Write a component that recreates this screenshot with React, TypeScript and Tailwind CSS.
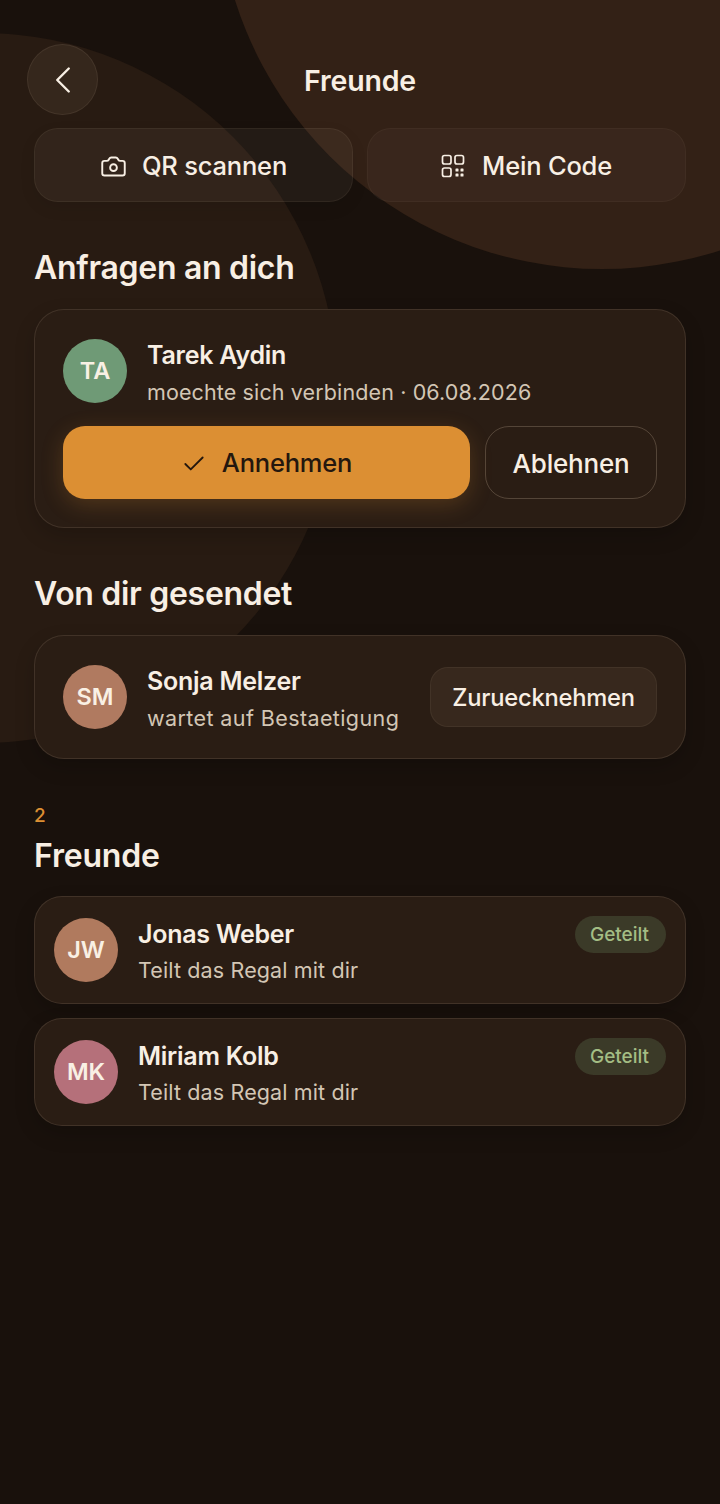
import React from "react";
import { Camera, Check, ChevronLeft } from "lucide-react";

function QrIcon() {
  return (
    <svg width="24" height="24" viewBox="0 0 24 24" fill="none" stroke="currentColor" strokeWidth="1.7">
      <rect x="1.5" y="1.5" width="8.5" height="8.5" rx="2" />
      <rect x="14" y="1.5" width="8.5" height="8.5" rx="2" />
      <rect x="1.5" y="14" width="8.5" height="8.5" rx="2" />
      <g fill="currentColor" stroke="none">
        <rect x="14.5" y="14.5" width="3" height="3" rx="0.6" />
        <rect x="19.5" y="14.5" width="3" height="3" rx="0.6" />
        <rect x="14.5" y="19.5" width="3" height="3" rx="0.6" />
        <rect x="19.5" y="19.5" width="3" height="3" rx="0.6" />
      </g>
    </svg>
  );
}

function Avatar({ label, color }: { label: string; color: string }) {
  return (
    <div className={`mt-px flex h-16 w-16 shrink-0 items-center justify-center rounded-full text-[23.5px] font-semibold text-[#f9f0e4] ${color}`}>
      {label}
    </div>
  );
}

function Person({ name, sub, subClass }: { name: string; sub: string; subClass: string }) {
  return (
    <div className="min-w-0 flex-1">
      <div className="text-[25px] leading-[34px] font-semibold tracking-[-0.25px] text-[#f8efe4]">{name}</div>
      <div className={`text-[21.5px] leading-[28px] font-normal text-[#d3c6b4] ${subClass}`}>{sub}</div>
    </div>
  );
}

function Friend({ name, label, color }: { name: string; label: string; color: string }) {
  return (
    <div className="flex h-[108px] items-start gap-5 rounded-[28px] border border-[#ffe6c81c] bg-[#2a1d14] pt-5 pr-[19px] pl-[19px] shadow-[0_8px_20px_rgba(0,0,0,0.18)]">
      <Avatar label={label} color={color} />
      <Person name={name} sub="Teilt das Regal mit dir" subClass="mt-[5px] tracking-[0.13px]" />
      <div className="-mt-px flex h-[37px] w-[91px] items-center justify-center rounded-full bg-[#3b3a28] pt-[2px] pr-[2px] text-[19px] font-medium text-[#a3bd84]">
        Geteilt
      </div>
    </div>
  );
}

export default function App() {
  return (
    <div className="relative h-[1504px] overflow-hidden bg-[#19110c] font-['Inter',sans-serif]">
      <div className="absolute top-[-501px] left-[217px] h-[770px] w-[770px] rounded-full bg-[#332116]" />
      <div className="absolute top-[33px] left-[-373px] h-[710px] w-[710px] rounded-full bg-[#281b12]" />
      <div className="relative px-[34px] pt-11">
        <header className="relative flex h-[70px] items-center justify-center">
          <button className="absolute top-0 left-[-7px] flex h-[71px] w-[71px] items-center justify-center rounded-full border border-[#ffe6c814] bg-[#35271c] text-[#f8efe4]">
            <ChevronLeft size={46} strokeWidth={1.25} />
          </button>
          <h1 className="pt-1 text-[28.5px] font-semibold tracking-[-0.2px] text-[#f8efe4]">Freunde</h1>
        </header>

        <div className="mt-[14px] grid grid-cols-2 gap-[14px]">
          <button className="flex h-[74px] items-center justify-center gap-[15px] rounded-[24px] border border-[#ffe6c80f] bg-[#ffeedc0c] pt-[2px] text-[25.5px] font-medium tracking-[-0.2px] text-[#f8efe4] shadow-[0_6px_16px_rgba(0,0,0,0.08)]">
            <Camera size={27} strokeWidth={1.7} />
            QR scannen
          </button>
          <button className="flex h-[74px] items-center justify-center gap-[17px] rounded-[24px] border border-[#ffe6c80a] bg-[#ffeedc08] pt-[2px] text-[25.5px] font-medium tracking-[-0.2px] text-[#f8efe4]">
            <QrIcon />
            Mein Code
          </button>
        </div>

        <h2 className="mt-[44px] text-[32px] leading-[44px] font-semibold tracking-[-0.3px] text-[#f8efe4]">Anfragen an dich</h2>

        <section className="mt-[19px] h-[219px] rounded-[30px] border border-[#ffe6c81c] bg-[#2a1d14] px-7 pt-7 shadow-[0_8px_20px_rgba(0,0,0,0.18)]">
          <div className="flex items-start gap-5">
            <Avatar label="TA" color="bg-[#6f9a76]" />
            <Person name="Tarek Aydin" sub="moechte sich verbinden · 06.08.2026" subClass="mt-[6px] tracking-[0.12px]" />
          </div>
          <div className="mt-5 flex gap-[15px]">
            <button className="flex h-[73px] w-[407px] items-center justify-center gap-[15px] rounded-[22px] bg-[#dc8f33] pt-[2px] text-[25.5px] font-medium tracking-[-0.2px] text-[#24170e] shadow-[0_6px_22px_rgba(220,143,51,0.22)]">
              <Check size={26} strokeWidth={1.7} />
              Annehmen
            </button>
            <button className="flex h-[73px] flex-1 items-center justify-center rounded-[24px] border border-[#ffe6c833] pt-[2px] text-[26px] font-medium tracking-[-0.2px] text-[#f8efe4]">
              Ablehnen
            </button>
          </div>
        </section>

        <h2 className="mt-[44px] text-[32px] leading-[44px] font-semibold tracking-[-0.3px] text-[#f8efe4]">Von dir gesendet</h2>

        <section className="mt-[19px] flex h-[124px] items-start gap-5 rounded-[30px] border border-[#ffe6c81c] bg-[#2a1d14] px-7 pt-7 shadow-[0_8px_20px_rgba(0,0,0,0.18)]">
          <Avatar label="SM" color="bg-[#b07a60]" />
          <Person name="Sonja Melzer" sub="wartet auf Bestaetigung" subClass="mt-[6px] tracking-[0.4px]" />
          <button className="mt-[3px] flex h-[60px] w-[227px] shrink-0 items-center justify-center rounded-[18px] border border-[#ffe6c80f] bg-[#37281d] pt-[2px] text-[23.7px] font-medium tracking-[-0.2px] text-[#f8efe4]">
            Zuruecknehmen
          </button>
        </section>

        <div className="mt-[45px] text-[19px] leading-[24px] font-medium text-[#dc8f33]">2</div>
        <h2 className="mt-[6px] text-[32px] leading-[44px] font-semibold tracking-[-0.2px] text-[#f8efe4]">Freunde</h2>

        <div className="mt-[18px] flex flex-col gap-[14px]">
          <Friend name="Jonas Weber" label="JW" color="bg-[#b07a5e]" />
          <Friend name="Miriam Kolb" label="MK" color="bg-[#b5707a]" />
        </div>
      </div>
    </div>
  );
}
